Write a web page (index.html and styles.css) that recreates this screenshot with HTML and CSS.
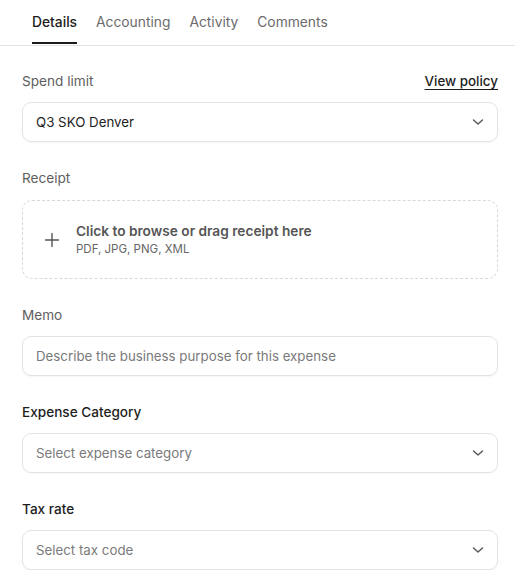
FILE: index.html
```html
<!DOCTYPE html>
<html lang="en">
<head>
<meta charset="utf-8">
<title>Expense details</title>
<link rel="stylesheet" href="styles.css">
</head>
<body>
<div class="panel">
  <nav class="tabs">
    <a class="tab active">Details</a>
    <a class="tab">Accounting</a>
    <a class="tab">Activity</a>
    <a class="tab">Comments</a>
  </nav>
  <div class="form">
    <div class="field">
      <div class="label-row">
        <span class="label">Spend limit</span>
        <a class="link">View policy</a>
      </div>
      <div class="control select">
        <span class="value">Q3 SKO Denver</span>
        <svg class="chev" width="12" height="8" viewBox="0 0 12 8"><path d="M1.5 2 L6 6 L10.5 2" fill="none" stroke="#555" stroke-width="1.4" stroke-linecap="round" stroke-linejoin="round"/></svg>
      </div>
    </div>
    <div class="field receipt">
      <div class="label-row"><span class="label">Receipt</span></div>
      <div class="dropzone">
        <svg class="plus" width="14" height="14" viewBox="0 0 14 14"><path d="M7 0.5 V13.5 M0.5 7 H13.5" stroke="#555" stroke-width="1.4" stroke-linecap="round"/></svg>
        <div class="drop-text">
          <div class="drop-title">Click to browse or drag receipt here</div>
          <div class="drop-sub">PDF, JPG, PNG, XML</div>
        </div>
      </div>
    </div>
    <div class="field">
      <div class="label-row"><span class="label">Memo</span></div>
      <div class="control">
        <span class="placeholder">Describe the business purpose for this expense</span>
      </div>
    </div>
    <div class="field">
      <div class="label-row"><span class="label strong">Expense Category</span></div>
      <div class="control select">
        <span class="placeholder">Select expense category</span>
        <svg class="chev" width="12" height="8" viewBox="0 0 12 8"><path d="M1.5 2 L6 6 L10.5 2" fill="none" stroke="#555" stroke-width="1.4" stroke-linecap="round" stroke-linejoin="round"/></svg>
      </div>
    </div>
    <div class="field">
      <div class="label-row"><span class="label strong">Tax rate</span></div>
      <div class="control select">
        <span class="placeholder">Select tax code</span>
        <svg class="chev" width="12" height="8" viewBox="0 0 12 8"><path d="M1.5 2 L6 6 L10.5 2" fill="none" stroke="#555" stroke-width="1.4" stroke-linecap="round" stroke-linejoin="round"/></svg>
      </div>
    </div>
  </div>
</div>
</body>
</html>
```
FILE: styles.css
```css
* { box-sizing: border-box; }
html, body { margin: 0; padding: 0; background: #fff; }
body {
  font-family: Inter, "Liberation Sans", sans-serif;
  color: #1f1f1f;
  font-size: 14px;
}
.panel { width: 515px; }
.tabs {
  display: flex;
  gap: 19px;
  padding: 0 0 0 32px;
  height: 46px;
  border-bottom: 1px solid #e4e4e4;
}
.tab {
  font-size: 13.8px;
  line-height: 20px;
  padding-top: 12px;
  color: #6b6b6b;
  height: 45px;
  position: relative;
}
.tab.active {
  color: #1c1c1c;
  font-weight: 500;
}
.tab.active::after {
  content: "";
  position: absolute;
  left: 0; right: 0;
  top: 42px;
  height: 2px;
  background: #1c1c1c;
}
.form {
  padding: 25px 17px 0 22px;
  display: flex;
  flex-direction: column;
  gap: 26px;
}
.field { display: flex; flex-direction: column; gap: 11px; }
.field.receipt { gap: 12px; }
.label-row {
  display: flex;
  justify-content: space-between;
  align-items: center;
  height: 20px;
}
.label { font-size: 13.6px; color: #5e5e5e; }
.label.strong { color: #1e1e1e; font-weight: 500; }
.link {
  font-size: 13.4px;
  color: #1e1e1e;
  font-weight: 500;
  text-decoration: underline;
  text-underline-offset: 3px;
}
.control {
  height: 40px;
  border: 1px solid #e3e3e3;
  border-radius: 9px;
  display: flex;
  align-items: center;
  padding: 0 13px 0 13px;
  box-shadow: 0 1px 2px rgba(0,0,0,0.04);
}
.select { justify-content: space-between; }
.value { font-size: 13.3px; color: #1e1e1e; }
.placeholder { font-size: 13.3px; color: #7a7a7a; }
.dropzone {
  height: 79px;
  border: 1.5px dashed #d8d8d8;
  border-radius: 10px;
  display: flex;
  align-items: center;
  padding: 0 0 0 22px;
  gap: 17px;
}
.plus { flex: none; margin-top: 1px; }
.drop-title { font-size: 13.7px; font-weight: 600; color: #555; line-height: 18px; }
.drop-sub { font-size: 11.5px; color: #666; line-height: 18px; }
```
